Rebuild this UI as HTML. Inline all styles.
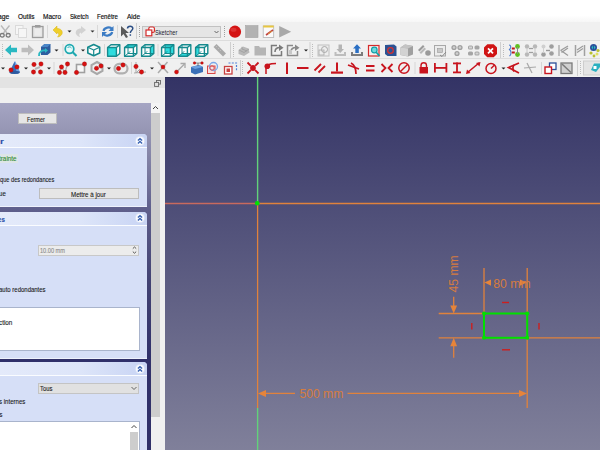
<!DOCTYPE html>
<html><head><meta charset="utf-8">
<style>
*{margin:0;padding:0;box-sizing:border-box}
html,body{width:600px;height:450px;overflow:hidden;background:#f0f0f0;font-family:"Liberation Sans",sans-serif;position:relative}
.a{position:absolute}
.t{position:absolute;white-space:nowrap;line-height:1;color:#111;transform-origin:0 0;-webkit-text-stroke:0.06px currentColor}
.tb{left:0;width:600px;background:#f0f0f0}
.hl{position:absolute;height:1px;background:#dcdcdc}
#view{left:165px;top:77px;width:435px;height:373px;background:linear-gradient(#333365 0%,#ababb8 156%);overflow:hidden}
#tp{left:0;top:103px;width:151px;height:347px;background:linear-gradient(#a5a5c3 0%,#9696b4 8%,#5f5f8c 30.5%,#434373 51%,#30306a 74%,#303068 100%)}
.box{position:absolute;left:0;width:147px;background:#d6dff7;border-top-right-radius:4px;border-bottom:1px solid #eef2fc}
.hdr{position:absolute;left:0;top:0;width:147px;height:14px;background:linear-gradient(90deg,#e4eafa,#dde5f9 55%,#c8d4f4);border-bottom:1px solid #fafcff;border-top-right-radius:4px}
.btn{position:absolute;background:#e6e6e6;border:1px solid #bdbdbd}
</style></head><body>
<div class="a" style="left:0;top:0;width:600px;height:22px;background:linear-gradient(#ffffff,#ffffff 70%,#f6f6f6)"></div>
<div class="t" style="left:-2.26px;top:12.95px;font-size:7.5px;transform:scaleX(0.900);color:#101010;-webkit-text-stroke:0.18px #101010">age</div>
<div class="t" style="left:17.50px;top:12.95px;font-size:7.5px;transform:scaleX(0.861);color:#101010;-webkit-text-stroke:0.18px #101010">Outils</div>
<div class="t" style="left:43.00px;top:12.95px;font-size:7.5px;transform:scaleX(0.864);color:#101010;-webkit-text-stroke:0.18px #101010">Macro</div>
<div class="t" style="left:69.50px;top:12.95px;font-size:7.5px;transform:scaleX(0.807);color:#101010;-webkit-text-stroke:0.18px #101010">Sketch</div>
<div class="t" style="left:97.00px;top:12.95px;font-size:7.5px;transform:scaleX(0.812);color:#101010;-webkit-text-stroke:0.18px #101010">Fenêtre</div>
<div class="t" style="left:127.00px;top:12.95px;font-size:7.5px;transform:scaleX(0.866);color:#101010;-webkit-text-stroke:0.18px #101010">Aide</div>
<div class="tb a" style="top:22px;height:18px"></div>
<div class="hl" style="left:0;top:40px;width:600px"></div>
<div class="tb a" style="top:41px;height:17px"></div>
<div class="hl" style="left:0;top:58px;width:600px"></div>
<div class="tb a" style="top:59px;height:18px"></div>
<svg class="a" style="left:0;top:0" width="600" height="80" viewBox="0 0 600 80">
<!-- row1 frame lines -->
<g fill="#d9d9d9">
<rect x="47" y="25" width="1" height="13"/>
<rect x="97" y="25" width="1" height="13"/>
<rect x="117" y="25" width="1" height="13"/>
</g>
<rect x="136" y="23" width="1" height="16" fill="#cfcfcf"/>
<g fill="#a0a0a0"><rect x="139" y="26" width="1" height="1"/><rect x="139" y="28" width="1" height="1"/><rect x="139" y="30" width="1" height="1"/><rect x="139" y="32" width="1" height="1"/><rect x="139" y="34" width="1" height="1"/><rect x="139" y="36" width="1" height="1"/>
<rect x="224" y="26" width="1" height="1"/><rect x="224" y="28" width="1" height="1"/><rect x="224" y="30" width="1" height="1"/><rect x="224" y="32" width="1" height="1"/><rect x="224" y="34" width="1" height="1"/><rect x="224" y="36" width="1" height="1"/></g>
<!-- scissors -->
<g fill="none" stroke="#b8b8b8" stroke-width="1.3"><line x1="1" y1="25.5" x2="7" y2="33"/><line x1="9.5" y1="25.5" x2="3.5" y2="33"/></g>
<g fill="none" stroke="#7c7c7c" stroke-width="1.3"><ellipse cx="2.2" cy="35.3" rx="2" ry="1.8"/><ellipse cx="8.2" cy="35.3" rx="2" ry="1.8"/></g>
<!-- copy (disabled) -->
<g fill="#f6f6f6" stroke="#dadada" stroke-width="1"><rect x="15.5" y="25.5" width="7.5" height="9"/><rect x="18.5" y="28.5" width="8" height="9"/></g>
<!-- paste -->
<rect x="32.5" y="26.5" width="10.5" height="11" fill="#e6e6e6" stroke="#9c9c9c" stroke-width="1.3"/>
<rect x="35" y="25" width="5.5" height="2.6" fill="#9c9c9c"/>
<rect x="34.8" y="29" width="6" height="6.5" fill="#ececec"/>
<!-- undo -->
<path d="M53 30 L57 26 L57 28.5 C61 28.5 63 31 62 34 C61 36 59 37 57.5 37 C59 35.5 59.5 33.5 57 32.5 L57 34 Z" fill="#efcf2a" stroke="#d8b414" stroke-width="0.5"/>
<polygon points="67.5,30.5 71.5,30.5 69.5,32.5" fill="#222"/>
<!-- redo disabled -->
<path d="M86 30 L81 26 L81 28.5 C77 28.5 75 31 76 34 C77 36 79 37 80.5 37 C79 35.5 78.5 33.5 81 32.5 L81 34 Z" fill="#d2d2d2"/>
<polygon points="90.5,30.5 94.5,30.5 92.5,32.5" fill="#333"/>
<!-- refresh -->
<g fill="none" stroke="#3c7cc4" stroke-width="2.2"><path d="M103.5 31 C104 27.5 110 26 112 29"/><path d="M112.2 32 C111.5 35.5 105.5 37 103.5 34"/></g>
<polygon points="113.5,26 113.5,31 108.5,31" fill="#3c7cc4"/><polygon points="102,37 102,32 107,32" fill="#3c7cc4"/>
<!-- whats this -->
<polygon points="121,26 121,36.5 123.5,34 126,38 128,37 125.5,33 129,33" fill="#5a5a5a"/>
<path d="M127.5 28.5 C127.5 25.5 133 25.5 132.8 28.5 C132.6 30.5 130.3 30.7 130.3 33" fill="none" stroke="#2c4f85" stroke-width="1.5"/>
<rect x="129.6" y="34.3" width="1.5" height="1.5" fill="#2c4f85"/>
<!-- workbench combo -->
<rect x="142.5" y="26.5" width="78" height="11" fill="#e5e5e5" stroke="#c2c2c2"/>
<rect x="148.8" y="27" width="5.6" height="5.4" rx="1.5" fill="#fff" stroke="#d42a2a" stroke-width="1.2"/>
<rect x="146" y="30" width="5.8" height="5.8" fill="#fff" stroke="#d42a2a" stroke-width="1.2"/>
<polyline points="214.5,31 216.5,33 218.5,31" fill="none" stroke="#666" stroke-width="1"/>
<text x="155" y="34.6" font-family="Liberation Sans" font-size="7.2px" fill="#202030" textLength="22.3" lengthAdjust="spacingAndGlyphs">Sketcher</text>
<!-- macro -->
<circle cx="235" cy="31.7" r="6.1" fill="#d41414"/>
<ellipse cx="233.5" cy="29.7" rx="3" ry="2" fill="#e85050" opacity="0.5"/>
<rect x="245.6" y="25.6" width="12.4" height="12" fill="#b2b2b2" stroke="#a4a4a4" stroke-width="0.6"/>
<rect x="263.2" y="26" width="10.5" height="11.5" fill="#fafafa" stroke="#b4b4b4" stroke-width="0.8"/>
<rect x="263.2" y="25.5" width="10.5" height="2" fill="#e8c640"/>
<line x1="266" y1="35" x2="273" y2="30" stroke="#c04040" stroke-width="1.6"/><line x1="268" y1="34" x2="272" y2="31" stroke="#e0b030" stroke-width="0.8"/>
<polygon points="279.2,26 291.2,31.7 279.2,37.4" fill="#a9a9a9"/>
</svg>
<svg class="a" style="left:0;top:0" width="600" height="80" viewBox="0 0 600 80"><rect x="2" y="44" width="1" height="1" fill="#bdbdbd"/><rect x="2" y="46" width="1" height="1" fill="#bdbdbd"/><rect x="2" y="48" width="1" height="1" fill="#bdbdbd"/><rect x="2" y="50" width="1" height="1" fill="#bdbdbd"/><rect x="2" y="52" width="1" height="1" fill="#bdbdbd"/><rect x="2" y="54" width="1" height="1" fill="#bdbdbd"/><rect x="2" y="56" width="1" height="1" fill="#bdbdbd"/><polygon points="5,50 11,44.5 11,47.8 17,47.8 17,52.2 11,52.2 11,55.5" fill="#2ab8c2"/><polygon points="34,50 28,44.5 28,47.8 21.5,47.8 21.5,52.2 28,52.2 28,55.5" fill="#bdbdbd"/><polygon points="41,47 44.5,44 50.5,44 50.5,52.5 47.5,55 41,55" fill="#2d5d9f"/><polygon points="41,47 44.5,44 50.5,44 47.5,47" fill="#4a86c8"/><path d="M39 56 C39 51 42 50 46 50.5" fill="none" stroke="#2ab8c2" stroke-width="1.8"/><polygon points="45,48 48,50.5 45,53" fill="#2ab8c2"/><polygon points="54.5,49.5 58.5,49.5 56.5,51.5" fill="#222"/><rect x="62.5" y="44" width="1" height="12" fill="#d6d6d6"/><circle cx="69.5" cy="49" r="4.3" fill="#e6fafa" stroke="#1ea8b0" stroke-width="1.7"/><line x1="72.5" y1="52" x2="76.5" y2="56" stroke="#1ea8b0" stroke-width="2.2"/><path d="M67.5 48 C68 46.5 70.5 46.5 71.5 48" stroke="#1ea8b0" stroke-width="0.9" fill="none"/><polygon points="81,49.5 85,49.5 83,51.5" fill="#222"/><polygon points="93.7,44.6 99.7,47.3 99.7,53 93.7,55.8 87.8,53 87.8,47.3" fill="#fbfbfb" stroke="#168a8e" stroke-width="1.6" stroke-linejoin="round"/><g stroke="#168a8e" stroke-width="1.2"><line x1="93.7" y1="50" x2="93.7" y2="55.5"/><line x1="93.7" y1="50" x2="88.3" y2="47.5"/><line x1="93.7" y1="50" x2="99.2" y2="47.5"/></g><rect x="104" y="44" width="1" height="12" fill="#d6d6d6"/><polygon points="107.6,47.5 111.0,44.7 119.8,44.7 119.8,53.5 116.39999999999999,56.3 107.6,56.3" fill="#fdfdfd"/><polygon points="107.6,47.5 116.39999999999999,47.5 116.39999999999999,56.3 107.6,56.3" fill="#2edcde"/><g fill="none" stroke="#168a8e" stroke-width="1.4" stroke-linejoin="round"><polygon points="107.6,47.5 111.0,44.7 119.8,44.7 119.8,53.5 116.39999999999999,56.3 107.6,56.3"/><polyline points="107.6,47.5 116.39999999999999,47.5 116.39999999999999,56.3"/><line x1="116.39999999999999" y1="47.5" x2="119.8" y2="44.7"/></g><polygon points="124.6,47.5 128.0,44.7 136.8,44.7 136.8,53.5 133.4,56.3 124.6,56.3" fill="#fdfdfd"/><polygon points="124.6,47.5 128.0,44.7 136.8,44.7 133.4,47.5" fill="#2edcde"/><g fill="none" stroke="#168a8e" stroke-width="1"><line x1="128.0" y1="53.5" x2="130.2" y2="51.3"/><polyline points="128.0,44.7 128.0,53.5 124.6,56.3"/><line x1="128.0" y1="53.5" x2="136.8" y2="53.5"/></g><g fill="none" stroke="#168a8e" stroke-width="1.4" stroke-linejoin="round"><polygon points="124.6,47.5 128.0,44.7 136.8,44.7 136.8,53.5 133.4,56.3 124.6,56.3"/><polyline points="124.6,47.5 133.4,47.5 133.4,56.3"/><line x1="133.4" y1="47.5" x2="136.8" y2="44.7"/></g><polygon points="141.60000000000002,47.5 145.00000000000003,44.7 153.80000000000004,44.7 153.80000000000004,53.5 150.40000000000003,56.3 141.60000000000002,56.3" fill="#fdfdfd"/><polygon points="150.40000000000003,47.5 153.80000000000004,44.7 153.80000000000004,53.5 150.40000000000003,56.3" fill="#2edcde"/><g fill="none" stroke="#168a8e" stroke-width="1"><line x1="145.00000000000003" y1="53.5" x2="147.20000000000002" y2="51.3"/><polyline points="145.00000000000003,44.7 145.00000000000003,53.5 141.60000000000002,56.3"/><line x1="145.00000000000003" y1="53.5" x2="153.80000000000004" y2="53.5"/></g><g fill="none" stroke="#168a8e" stroke-width="1.4" stroke-linejoin="round"><polygon points="141.60000000000002,47.5 145.00000000000003,44.7 153.80000000000004,44.7 153.80000000000004,53.5 150.40000000000003,56.3 141.60000000000002,56.3"/><polyline points="141.60000000000002,47.5 150.40000000000003,47.5 150.40000000000003,56.3"/><line x1="150.40000000000003" y1="47.5" x2="153.80000000000004" y2="44.7"/></g><rect x="157.5" y="44" width="1" height="12" fill="#d6d6d6"/><polygon points="161.60000000000002,47.5 165.00000000000003,44.7 173.80000000000004,44.7 173.80000000000004,53.5 170.40000000000003,56.3 161.60000000000002,56.3" fill="#fdfdfd"/><polygon points="165.00000000000003,44.7 173.80000000000004,44.7 173.80000000000004,53.5 165.00000000000003,53.5" fill="#2edcde"/><g fill="none" stroke="#168a8e" stroke-width="1"><line x1="165.00000000000003" y1="53.5" x2="167.20000000000002" y2="51.3"/><polyline points="165.00000000000003,44.7 165.00000000000003,53.5 161.60000000000002,56.3"/><line x1="165.00000000000003" y1="53.5" x2="173.80000000000004" y2="53.5"/></g><g fill="none" stroke="#168a8e" stroke-width="1.4" stroke-linejoin="round"><polygon points="161.60000000000002,47.5 165.00000000000003,44.7 173.80000000000004,44.7 173.80000000000004,53.5 170.40000000000003,56.3 161.60000000000002,56.3"/><polyline points="161.60000000000002,47.5 170.40000000000003,47.5 170.40000000000003,56.3"/><line x1="170.40000000000003" y1="47.5" x2="173.80000000000004" y2="44.7"/></g><polygon points="178.60000000000002,47.5 182.00000000000003,44.7 190.80000000000004,44.7 190.80000000000004,53.5 187.40000000000003,56.3 178.60000000000002,56.3" fill="#fdfdfd"/><polygon points="178.60000000000002,56.3 182.00000000000003,53.5 190.80000000000004,53.5 187.40000000000003,56.3" fill="#2edcde"/><g fill="none" stroke="#168a8e" stroke-width="1"><line x1="182.00000000000003" y1="53.5" x2="184.20000000000002" y2="51.3"/><polyline points="182.00000000000003,44.7 182.00000000000003,53.5 178.60000000000002,56.3"/><line x1="182.00000000000003" y1="53.5" x2="190.80000000000004" y2="53.5"/></g><g fill="none" stroke="#168a8e" stroke-width="1.4" stroke-linejoin="round"><polygon points="178.60000000000002,47.5 182.00000000000003,44.7 190.80000000000004,44.7 190.80000000000004,53.5 187.40000000000003,56.3 178.60000000000002,56.3"/><polyline points="178.60000000000002,47.5 187.40000000000003,47.5 187.40000000000003,56.3"/><line x1="187.40000000000003" y1="47.5" x2="190.80000000000004" y2="44.7"/></g><polygon points="195.60000000000002,47.5 199.00000000000003,44.7 207.80000000000004,44.7 207.80000000000004,53.5 204.40000000000003,56.3 195.60000000000002,56.3" fill="#fdfdfd"/><polygon points="195.60000000000002,47.5 199.00000000000003,44.7 199.00000000000003,53.5 195.60000000000002,56.3" fill="#2edcde"/><g fill="none" stroke="#168a8e" stroke-width="1"><line x1="199.00000000000003" y1="53.5" x2="201.20000000000002" y2="51.3"/><polyline points="199.00000000000003,44.7 199.00000000000003,53.5 195.60000000000002,56.3"/><line x1="199.00000000000003" y1="53.5" x2="207.80000000000004" y2="53.5"/></g><g fill="none" stroke="#168a8e" stroke-width="1.4" stroke-linejoin="round"><polygon points="195.60000000000002,47.5 199.00000000000003,44.7 207.80000000000004,44.7 207.80000000000004,53.5 204.40000000000003,56.3 195.60000000000002,56.3"/><polyline points="195.60000000000002,47.5 204.40000000000003,47.5 204.40000000000003,56.3"/><line x1="204.40000000000003" y1="47.5" x2="207.80000000000004" y2="44.7"/></g><polygon points="213.5,47 216.5,44 226,53.5 223,56.5" fill="#aaaaaa"/><g stroke="#d8d8d8" stroke-width="0.5"><line x1="216" y1="47" x2="217" y2="46"/><line x1="218" y1="49" x2="219" y2="48"/><line x1="220" y1="51" x2="221" y2="50"/></g><rect x="230" y="42" width="1" height="16" fill="#cfcfcf"/><rect x="233" y="44" width="1" height="1" fill="#bdbdbd"/><rect x="233" y="46" width="1" height="1" fill="#bdbdbd"/><rect x="233" y="48" width="1" height="1" fill="#bdbdbd"/><rect x="233" y="50" width="1" height="1" fill="#bdbdbd"/><rect x="233" y="52" width="1" height="1" fill="#bdbdbd"/><rect x="233" y="54" width="1" height="1" fill="#bdbdbd"/><rect x="233" y="56" width="1" height="1" fill="#bdbdbd"/><g fill="#b9b9b9"><polygon points="238.5,50 243,46.5 248.5,48.5 249.5,52.5 244,56 238.5,54"/></g><g fill="none" stroke="#9c9c9c" stroke-width="0.8"><polyline points="239,50 244,52.5 249,49"/><polyline points="242,46.8 242,49 247,51"/></g><path d="M254.5 46 L259 46 L260 47.5 L266 47.5 L266 55.5 L254.5 55.5 Z" fill="#b5b5b5"/><g fill="none" stroke="#7a7a7a" stroke-width="1.5"><polyline points="277,45.5 271.5,45.5 271.5,55.5 281.5,55.5 281.5,51"/></g><path d="M275 52 C275 48.5 277 47.5 280 47.5" stroke="#7a7a7a" stroke-width="1.6" fill="none"/><polygon points="279,44.5 283.5,47.8 279,51" fill="#7a7a7a"/><g fill="none" stroke="#8a8a8a" stroke-width="1.5"><polyline points="293,45.5 287.5,45.5 287.5,55.5 297.5,55.5 297.5,51"/></g><path d="M291 52 C291 48.5 293 47.5 296 47.5" stroke="#8a8a8a" stroke-width="1.6" fill="none"/><polygon points="295,44.5 299.5,47.8 295,51" fill="#8a8a8a"/><rect x="289" y="50" width="3" height="4" fill="#c8c8c8"/><polygon points="304,49.5 308,49.5 306,51.5" fill="#222"/><rect x="309.5" y="42" width="1" height="16" fill="#cfcfcf"/><rect x="312" y="44" width="1" height="1" fill="#bdbdbd"/><rect x="312" y="46" width="1" height="1" fill="#bdbdbd"/><rect x="312" y="48" width="1" height="1" fill="#bdbdbd"/><rect x="312" y="50" width="1" height="1" fill="#bdbdbd"/><rect x="312" y="52" width="1" height="1" fill="#bdbdbd"/><rect x="312" y="54" width="1" height="1" fill="#bdbdbd"/><rect x="312" y="56" width="1" height="1" fill="#bdbdbd"/><rect x="318" y="45" width="11" height="11" fill="#eeeeee" stroke="#c0c0c0" stroke-width="1"/><circle cx="324.5" cy="49.5" r="3" fill="none" stroke="#a8a8a8" stroke-width="1"/><rect x="319" y="50" width="5" height="5" fill="none" stroke="#a8a8a8" stroke-width="0.8"/><rect x="334.5" y="52" width="11.5" height="4" fill="#bdbdbd"/><rect x="336.5" y="52" width="7.5" height="2" fill="#eee"/><polygon points="338.5,44.5 342,44.5 342,49 344,49 340.2,53 336.5,49 338.5,49" fill="#b4b4b4"/><rect x="351" y="52" width="12" height="4" fill="#7c7c7c"/><rect x="353" y="52" width="8" height="2" fill="#eee"/><polygon points="355.3,53 358.8,53 358.8,48.5 361,48.5 357,44.2 353,48.5 355.3,48.5" fill="#2a6fc4"/><rect x="368.5" y="45.5" width="10.5" height="10.5" fill="#fbeeee" stroke="#d42a2a" stroke-width="1.2"/><circle cx="374.3" cy="50" r="2.8" fill="#6fd8dd" stroke="#14a0a8" stroke-width="1.2"/><line x1="376" y1="52" x2="379.5" y2="56" stroke="#14a0a8" stroke-width="1.8"/><polygon points="385,45 394,44.5 396.5,46.5 396.5,56 387.5,56 385,54" fill="#2b5293"/><circle cx="390.5" cy="50.5" r="2.8" fill="none" stroke="#d43030" stroke-width="1.3"/><polygon points="400.5,47.5 405,44.5 413,46 413,54.5 408,56.5 400.5,55" fill="#a0a0a0"/><polygon points="400.5,47.5 405,44.5 413,46 408,48.5" fill="#c4c4c4"/><polygon points="400.5,47.5 408,48.5 408,56.5 400.5,55" fill="#d2d2d2"/><g fill="#9a9a9a"><circle cx="428" cy="53" r="2.8"/><polygon points="418,50 423,45 424.5,46.5 419.5,51.5"/><polygon points="421,54 426,49 424.5,47.5 419.5,52.5" fill="#b8b8b8"/></g><rect x="434.5" y="45.5" width="11" height="10.5" fill="#ececec" stroke="#a8a8a8" stroke-width="1"/><rect x="437.5" y="48.5" width="5" height="4" fill="#c8c8c8" stroke="#999" stroke-width="0.6"/><polyline points="440,55 442,56.5 446,52" fill="none" stroke="#888" stroke-width="1"/><g fill="#a0a0a0"><circle cx="454" cy="47.5" r="2.6"/><circle cx="460" cy="47.5" r="2.6"/><circle cx="457" cy="53.5" r="2.6"/></g><g fill="#cfcfcf"><circle cx="454" cy="47.5" r="1.2"/><circle cx="460" cy="47.5" r="1.2"/><circle cx="457" cy="53.5" r="1.2"/></g><g fill="#a5a5a5"><rect x="468" y="45.5" width="5" height="4" rx="1.5"/><rect x="474.5" y="45.5" width="5" height="4" rx="1.5"/><rect x="468" y="51.5" width="5" height="4" rx="1.5"/><rect x="474.5" y="51.5" width="5" height="4" rx="1.5"/></g><g fill="#d4d4d4"><rect x="469" y="46.5" width="3" height="2"/><rect x="475.5" y="52.5" width="3" height="2"/></g><polygon points="487.3,44.3 493.7,44.3 497,47.6 497,54 493.7,57.3 487.3,57.3 484,54 484,47.6" fill="#d01414"/><g stroke="#fff" stroke-width="1.7"><line x1="488" y1="48.3" x2="493" y2="53.3"/><line x1="493" y1="48.3" x2="488" y2="53.3"/></g><rect x="500" y="42" width="1" height="16" fill="#cfcfcf"/><rect x="503" y="44" width="1" height="1" fill="#bdbdbd"/><rect x="503" y="46" width="1" height="1" fill="#bdbdbd"/><rect x="503" y="48" width="1" height="1" fill="#bdbdbd"/><rect x="503" y="50" width="1" height="1" fill="#bdbdbd"/><rect x="503" y="52" width="1" height="1" fill="#bdbdbd"/><rect x="503" y="54" width="1" height="1" fill="#bdbdbd"/><rect x="503" y="56" width="1" height="1" fill="#bdbdbd"/><path d="M509 45 C511 45 511.5 48 509.5 49.5 C511.5 51 511.5 54.5 509.5 56" fill="none" stroke="#4a7ad0" stroke-width="1.1"/><g fill="#c01818"><rect x="511.8" y="47.5" width="3" height="2"/><rect x="511.8" y="51.5" width="3" height="2"/></g><g fill="#60c020"><circle cx="517.5" cy="46.5" r="2.4"/><circle cx="517.5" cy="54.5" r="2.4"/></g><rect x="517" y="47" width="1" height="7" fill="#888"/><g fill="#b8b8b8"><circle cx="527" cy="46.5" r="2.2"/><circle cx="535" cy="46.5" r="2.2"/><circle cx="527" cy="54.5" r="2.2"/><circle cx="535" cy="54.5" r="2.2"/></g><g stroke="#a0a0a0" stroke-width="1.3"><line x1="529" y1="48.5" x2="533" y2="48.5"/><line x1="529" y1="52.5" x2="533" y2="52.5"/></g><g stroke="#cfcfcf" stroke-width="1.2"><line x1="527" y1="48" x2="527" y2="53"/><line x1="535" y1="48" x2="535" y2="53"/></g><g fill="#9e9e9e"><circle cx="543.5" cy="54.5" r="2.3"/><circle cx="551.5" cy="46.5" r="2.3"/><circle cx="551.5" cy="53.5" r="2.3"/></g><circle cx="543.5" cy="46.5" r="2" fill="#cfcfcf"/><rect x="546" y="49.8" width="4" height="1.4" fill="#999"/><rect x="543" y="48" width="1" height="5" fill="#d0d0d0"/><g stroke="#b0b0b0" stroke-width="1.5"><line x1="559" y1="45" x2="559" y2="56"/></g><g stroke="#9a9a9a" stroke-width="1.2"><line x1="560.5" y1="50.5" x2="568" y2="46"/><line x1="561.5" y1="52.5" x2="568" y2="48"/><line x1="561" y1="50.5" x2="568" y2="55.5"/></g><g stroke="#a0a0a0" stroke-width="1.5"><line x1="575.5" y1="45" x2="575.5" y2="56"/><line x1="584.5" y1="45" x2="584.5" y2="56"/></g><g stroke="#9a9a9a" stroke-width="1.1"><line x1="577" y1="50" x2="583" y2="46"/><line x1="577" y1="52.5" x2="583" y2="48.5"/></g><circle cx="593.5" cy="47.5" r="3.5" fill="#2b4e9a"/><polygon points="591.5,47.5 593,45.5 593,49.5" fill="#20c0c0"/><polygon points="595.5,47.5 594,45.5 594,49.5" fill="#20c0c0"/><g fill="#b8c030"><circle cx="591" cy="53" r="1.6"/><circle cx="598" cy="50.5" r="1.6"/><circle cx="594" cy="56" r="1.4"/></g><circle cx="597" cy="54" r="1.5" fill="#e0e060"/></svg><svg class="a" style="left:0;top:0" width="600" height="80" viewBox="0 0 600 80"><polygon points="1,67.5 5,67.5 3,69.5" fill="#222"/><polygon points="14.5,61.5 9.5,72 11.5,73.8 18,73.8 19.8,72" fill="#3a6cb8"/><polygon points="14.5,61.5 15.5,61.5 19.8,72 16.5,72" fill="#6ea4e6"/><ellipse cx="14.6" cy="72.3" rx="5.2" ry="1.6" fill="#2d5aa0"/><circle cx="11" cy="70" r="2.15" fill="#d81010" stroke="#a00c0c" stroke-width="0.4"/><circle cx="17" cy="67" r="2.15" fill="#d81010" stroke="#a00c0c" stroke-width="0.4"/><polygon points="24,67.5 28,67.5 26,69.5" fill="#222"/><line x1="35" y1="69" x2="40" y2="67" stroke="#b8b8b8" stroke-width="2"/><circle cx="34" cy="64.5" r="2.15" fill="#d81010" stroke="#a00c0c" stroke-width="0.4"/><circle cx="41" cy="64" r="2.15" fill="#d81010" stroke="#a00c0c" stroke-width="0.4"/><circle cx="33.5" cy="72" r="2.15" fill="#d81010" stroke="#a00c0c" stroke-width="0.4"/><circle cx="40.5" cy="72" r="2.15" fill="#d81010" stroke="#a00c0c" stroke-width="0.4"/><polygon points="47,67.5 51,67.5 49,69.5" fill="#222"/><rect x="53.5" y="62" width="1" height="12" fill="#d6d6d6"/><polyline points="59.5,72.5 61.5,67 65,72.5 67.5,64" fill="none" stroke="#b0b0b0" stroke-width="1.2"/><circle cx="59.5" cy="72.5" r="2.15" fill="#d81010" stroke="#a00c0c" stroke-width="0.4"/><circle cx="61.5" cy="67" r="2.15" fill="#d81010" stroke="#a00c0c" stroke-width="0.4"/><circle cx="65" cy="72.5" r="2.15" fill="#d81010" stroke="#a00c0c" stroke-width="0.4"/><circle cx="67.5" cy="64" r="2.15" fill="#d81010" stroke="#a00c0c" stroke-width="0.4"/><rect x="76.5" y="64.5" width="8" height="8" fill="#f8f8f8" stroke="#a0a0a0" stroke-width="1.6"/><circle cx="76.5" cy="72.5" r="2.15" fill="#d81010" stroke="#a00c0c" stroke-width="0.4"/><circle cx="84.5" cy="64" r="2.15" fill="#d81010" stroke="#a00c0c" stroke-width="0.4"/><polygon points="97,62 102.5,65 102.5,71 97,74 91.5,71 91.5,65" fill="none" stroke="#a8a8a8" stroke-width="2"/><circle cx="96.5" cy="68.3" r="2.15" fill="#d81010" stroke="#a00c0c" stroke-width="0.4"/><circle cx="101" cy="66" r="2.15" fill="#d81010" stroke="#a00c0c" stroke-width="0.4"/><polygon points="107,67.5 111,67.5 109,69.5" fill="#222"/><rect x="114.5" y="63.8" width="13" height="9.5" rx="4.75" fill="none" stroke="#b0b0b0" stroke-width="2.2"/><circle cx="118.5" cy="68.5" r="2.15" fill="#d81010" stroke="#a00c0c" stroke-width="0.4"/><circle cx="123" cy="65" r="2.15" fill="#d81010" stroke="#a00c0c" stroke-width="0.4"/><rect x="131" y="62" width="1" height="12" fill="#d6d6d6"/><g stroke="#a8a8a8" stroke-width="1"><line x1="136" y1="62" x2="136" y2="73"/><line x1="134" y1="73" x2="146" y2="72"/><line x1="136" y1="73" x2="140" y2="69"/></g><circle cx="136" cy="66.5" r="2.15" fill="#d81010" stroke="#a00c0c" stroke-width="0.4"/><circle cx="141.5" cy="72" r="2.15" fill="#d81010" stroke="#a00c0c" stroke-width="0.4"/><polygon points="150,67.5 154,67.5 152,69.5" fill="#222"/><g stroke="#ababab" stroke-width="1.5"><line x1="158" y1="62" x2="168" y2="73"/><line x1="167.5" y1="62" x2="158" y2="73"/></g><circle cx="163" cy="67" r="2" fill="#d81010" stroke="#a00c0c" stroke-width="0.4"/><line x1="177" y1="71.5" x2="184.5" y2="64" stroke="#a8a8a8" stroke-width="1.3"/><polyline points="180.5,63.5 185,63.5 185,68" fill="none" stroke="#a8a8a8" stroke-width="1.3"/><circle cx="176.5" cy="72" r="2" fill="#d81010" stroke="#a00c0c" stroke-width="0.4"/><polygon points="191,67 199,65 203,67 203,72 195,74.5 191,72.5" fill="#3a70b8"/><polygon points="191,67 199,65 203,67 195,69" fill="#6aa0e0"/><line x1="194.5" y1="63" x2="202" y2="63" stroke="#777" stroke-width="0.8"/><line x1="198" y1="63" x2="198" y2="66" stroke="#555" stroke-width="0.8"/><circle cx="194.5" cy="63" r="1.3" fill="#d81010" stroke="#a00c0c" stroke-width="0.4"/><circle cx="202" cy="63" r="1.3" fill="#d81010" stroke="#a00c0c" stroke-width="0.4"/><rect x="207.5" y="66" width="7.5" height="7.5" fill="#f7e0e0" stroke="#d84848" stroke-width="1"/><circle cx="213.5" cy="66.5" r="4" fill="none" stroke="#7aa8e8" stroke-width="1.3"/><circle cx="212" cy="68" r="2.2" fill="none" stroke="#d84848" stroke-width="0.9"/><rect x="224.5" y="66.5" width="7.5" height="7.5" fill="#fff" stroke="#c84040" stroke-width="1.3"/><rect x="226.5" y="68.5" width="3.5" height="3.5" fill="#c84040"/><polyline points="228.5,63 236.5,63 236.5,70.5" fill="none" stroke="#5080d8" stroke-width="1.2" stroke-dasharray="2,1.3"/><rect x="240" y="60" width="1" height="16" fill="#cfcfcf"/><rect x="242" y="61" width="1" height="1" fill="#bdbdbd"/><rect x="242" y="63" width="1" height="1" fill="#bdbdbd"/><rect x="242" y="65" width="1" height="1" fill="#bdbdbd"/><rect x="242" y="67" width="1" height="1" fill="#bdbdbd"/><rect x="242" y="69" width="1" height="1" fill="#bdbdbd"/><rect x="242" y="71" width="1" height="1" fill="#bdbdbd"/><rect x="242" y="73" width="1" height="1" fill="#bdbdbd"/><g stroke="#c8141e" stroke-width="1.8"><line x1="247.5" y1="62.5" x2="250.8" y2="65.8"/><line x1="258.5" y1="62.5" x2="255.2" y2="65.8"/><line x1="247.5" y1="73.5" x2="250.8" y2="70.2"/><line x1="258.5" y1="73.5" x2="255.2" y2="70.2"/></g><circle cx="253" cy="68" r="2.9" fill="#c8141e"/><path d="M266 74 L266 68 C266 64.5 270 63.5 276 63.5" fill="none" stroke="#c8141e" stroke-width="1.5"/><circle cx="267.3" cy="66.3" r="2.8" fill="#c8141e"/><rect x="286" y="62.5" width="2" height="11.5" fill="#c8141e"/><rect x="297" y="67" width="11.5" height="2" fill="#c8141e"/><g stroke="#c8141e" stroke-width="1.8"><line x1="314.5" y1="70.5" x2="321" y2="64"/><line x1="318.5" y1="72.5" x2="325" y2="66"/></g><rect x="336" y="62.5" width="2" height="9" fill="#c8141e"/><rect x="331" y="71.5" width="12" height="2.2" fill="#c8141e"/><g stroke="#c8141e" stroke-width="1.7" fill="none"><line x1="348" y1="65" x2="359" y2="69"/><path d="M351 63 C355 65 356 69 356 74"/></g><rect x="366" y="65" width="8.5" height="2" fill="#c8141e"/><rect x="366" y="69.5" width="8.5" height="2" fill="#c8141e"/><g stroke="#c8141e" stroke-width="1.8" fill="none"><polyline points="381.5,64 385.5,68 381.5,72"/><polyline points="392.5,64 388.5,68 392.5,72"/></g><circle cx="404" cy="68" r="5.2" fill="none" stroke="#c8141e" stroke-width="1.5"/><line x1="400.5" y1="71.5" x2="407.5" y2="64.5" stroke="#c8141e" stroke-width="1.5"/><rect x="414.5" y="62" width="1" height="12" fill="#d6d6d6"/><path d="M421 67 L421 65.5 C421 61.8 426.5 61.8 426.5 65.5 L426.5 67" fill="none" stroke="#c8141e" stroke-width="1.4"/><rect x="419.5" y="67" width="8.5" height="6.5" fill="#c8141e"/><rect x="434" y="63" width="1.8" height="9.5" fill="#c8141e"/><rect x="445.5" y="63" width="1.8" height="9.5" fill="#c8141e"/><rect x="434" y="67" width="13" height="1.8" fill="#c8141e"/><rect x="453" y="62.5" width="8" height="1.8" fill="#c8141e"/><rect x="453" y="71.5" width="8" height="1.8" fill="#c8141e"/><rect x="456.1" y="62.5" width="1.8" height="10.5" fill="#c8141e"/><line x1="467.5" y1="72.5" x2="479" y2="63" stroke="#c8141e" stroke-width="1.6"/><polygon points="466,74 467,69.5 470.5,73" fill="#c8141e"/><polygon points="480.5,62 479.5,66.5 476,63" fill="#c8141e"/><circle cx="491" cy="68.5" r="5" fill="none" stroke="#c8141e" stroke-width="1.5"/><line x1="491" y1="68.5" x2="494.5" y2="65" stroke="#c8141e" stroke-width="1.4"/><polygon points="501.5,67.5 505.5,67.5 503.5,69.5" fill="#222"/><g stroke="#c8141e" stroke-width="1.7" fill="none"><polyline points="519,63 508.5,67.5 519,73"/><path d="M514 65 C512.5 67 512.5 69 514 71.5"/></g><g stroke="#a8a8a8" stroke-width="1.2"><line x1="524" y1="68" x2="536" y2="67"/><line x1="527" y1="63" x2="532" y2="73"/></g><rect x="541" y="62" width="1" height="12" fill="#d6d6d6"/><rect x="549.5" y="63" width="6.5" height="6.5" fill="#fff" stroke="#2a4e98" stroke-width="1.3"/><rect x="545" y="67" width="6.5" height="6.5" fill="#fff" stroke="#c8141e" stroke-width="1.4"/><rect x="561" y="63" width="11" height="10.5" fill="#d0d0d0" stroke="#7a7a7a" stroke-width="1.3"/><line x1="562" y1="64" x2="571" y2="72.5" stroke="#7a7a7a" stroke-width="1.5"/><rect x="577" y="60" width="1" height="16" fill="#cfcfcf"/><rect x="580" y="61" width="1" height="1" fill="#bdbdbd"/><rect x="580" y="63" width="1" height="1" fill="#bdbdbd"/><rect x="580" y="65" width="1" height="1" fill="#bdbdbd"/><rect x="580" y="67" width="1" height="1" fill="#bdbdbd"/><rect x="580" y="69" width="1" height="1" fill="#bdbdbd"/><rect x="580" y="71" width="1" height="1" fill="#bdbdbd"/><rect x="580" y="73" width="1" height="1" fill="#bdbdbd"/><rect x="583.5" y="61" width="17" height="14" fill="#e4e4e4" stroke="#cdcdcd"/><polygon points="591,70 594,63.5 600,63.5 600,67 596,72" fill="#2ab0c0"/><rect x="593.5" y="66" width="3" height="3" fill="#fff"/></svg><div class="a" style="left:0;top:77px;width:165px;height:11px;background:#e3e3e3"></div>
<div class="a" style="left:0;top:88px;width:165px;height:362px;background:#f0f0f0"></div>
<div id="tp" class="a"></div>
<svg class="a" style="left:153.5px;top:80px" width="8" height="7" viewBox="0 0 8 7"><rect x="2.5" y="0.5" width="4" height="3.6" fill="none" stroke="#666" stroke-width="0.9"/><rect x="0.6" y="2.4" width="4" height="4" fill="#e3e3e3" stroke="#666" stroke-width="0.9"/></svg>
<div class="btn" style="left:17.5px;top:113px;width:39.2px;height:11px"></div>
<div class="box" style="top:134px;height:73px"><div class="hdr"></div></div>
<div class="box" style="top:212px;height:146.5px"><div class="hdr"></div></div>
<div class="box" style="top:362px;height:100px"><div class="hdr"></div></div>
<svg class="a" style="left:134.3px;top:134.8px" width="12" height="12" viewBox="0 0 12 12"><circle cx="6" cy="6" r="4.8" fill="#f8faff" stroke="#d0dbf2" stroke-width="0.8"/><polyline points="3.9,5.6 6,3.7 8.1,5.6" fill="none" stroke="#3560b0" stroke-width="1.3"/><polyline points="3.9,8.4 6,6.5 8.1,8.4" fill="none" stroke="#3560b0" stroke-width="1.3"/></svg><svg class="a" style="left:134.3px;top:212.3px" width="12" height="12" viewBox="0 0 12 12"><circle cx="6" cy="6" r="4.8" fill="#f8faff" stroke="#d0dbf2" stroke-width="0.8"/><polyline points="3.9,5.6 6,3.7 8.1,5.6" fill="none" stroke="#3560b0" stroke-width="1.3"/><polyline points="3.9,8.4 6,6.5 8.1,8.4" fill="none" stroke="#3560b0" stroke-width="1.3"/></svg><svg class="a" style="left:134.3px;top:362.5px" width="12" height="12" viewBox="0 0 12 12"><circle cx="6" cy="6" r="4.8" fill="#f8faff" stroke="#d0dbf2" stroke-width="0.8"/><polyline points="3.9,5.6 6,3.7 8.1,5.6" fill="none" stroke="#3560b0" stroke-width="1.3"/><polyline points="3.9,8.4 6,6.5 8.1,8.4" fill="none" stroke="#3560b0" stroke-width="1.3"/></svg>
<div class="a" style="left:0;top:154px;width:17.5px;height:9px;background:#dde5e6"></div>
<div class="btn" style="left:39px;top:187.6px;width:99.8px;height:11px"></div>
<div class="a" style="left:38px;top:244.5px;width:101px;height:11.5px;background:#ececec;border:1px solid #c8c8c8"></div>
<svg class="a" style="left:131px;top:245px" width="7" height="10" viewBox="0 0 7 10"><polyline points="1.8,3.6 3.5,2 5.2,3.6" fill="none" stroke="#444" stroke-width="0.9"/><polyline points="1.8,6.6 3.5,8.2 5.2,6.6" fill="none" stroke="#444" stroke-width="0.9"/></svg>
<div class="a" style="left:-2px;top:306.5px;width:141.5px;height:44px;background:#fff;border:1px solid #a9b4cc"></div>
<div class="a" style="left:38px;top:382.5px;width:101px;height:11px;background:#e1e1e1;border:1px solid #c4c4c4"></div>
<svg class="a" style="left:130px;top:384px" width="8" height="8" viewBox="0 0 8 8"><polyline points="1.5,3 4,5.5 6.5,3" fill="none" stroke="#555" stroke-width="0.9"/></svg>
<div class="a" style="left:-2px;top:420.6px;width:141.5px;height:40px;background:#fff;border:1px solid #a9b4cc"></div>
<div class="a" style="left:130px;top:432px;width:8px;height:20px;background:#cdcdcd"></div>
<svg class="a" style="left:130px;top:423px" width="8" height="8" viewBox="0 0 8 8"><polyline points="1.5,5 4,2.5 6.5,5" fill="none" stroke="#444" stroke-width="1"/></svg>
<div class="a" style="left:151px;top:103px;width:9px;height:10px;background:#f4f4f4"></div>
<svg class="a" style="left:151px;top:104px" width="9" height="8" viewBox="0 0 9 8"><polyline points="2,5 4.5,2.5 7,5" fill="none" stroke="#444" stroke-width="1"/></svg>
<div class="a" style="left:151px;top:113px;width:9px;height:304px;background:#cdcdcd"></div>
<div class="a" style="left:151px;top:417px;width:9px;height:33px;background:#f0f0f0"></div>
<div class="t" style="left:27.10px;top:116.98px;font-size:6.4px;transform:scaleX(0.868);color:#1a1a1a;-webkit-text-stroke:0.1px currentColor">Fermer</div>
<div class="t" style="left:-0.30px;top:138.78px;font-size:6.4px;transform:scaleX(1.548);color:#2b50a8;font-weight:bold;-webkit-text-stroke:0.1px currentColor">r</div>
<div class="t" style="left:-0.60px;top:156.08px;font-size:6.4px;transform:scaleX(0.989);color:#2f8a2f;-webkit-text-stroke:0.1px currentColor">trainte</div>
<div class="t" style="left:0.30px;top:177.28px;font-size:6.4px;transform:scaleX(0.884);color:#1a1a1a;-webkit-text-stroke:0.1px currentColor">que des redondances</div>
<div class="t" style="left:-0.80px;top:191.38px;font-size:6.4px;transform:scaleX(0.955);color:#1a1a1a;-webkit-text-stroke:0.1px currentColor">ue</div>
<div class="t" style="left:70.80px;top:191.58px;font-size:6.4px;transform:scaleX(0.969);color:#1a1a1a;-webkit-text-stroke:0.1px currentColor">Mettre à jour</div>
<div class="t" style="left:-2.20px;top:216.98px;font-size:6.4px;transform:scaleX(0.976);color:#2b50a8;font-weight:bold;-webkit-text-stroke:0.1px currentColor">es</div>
<div class="t" style="left:40.00px;top:248.28px;font-size:6.4px;transform:scaleX(0.879);color:#8a8a8a;-webkit-text-stroke:0.1px currentColor">10.00 mm</div>
<div class="t" style="left:-0.60px;top:286.88px;font-size:6.4px;transform:scaleX(0.937);color:#1a1a1a;-webkit-text-stroke:0.1px currentColor">auto redondantes</div>
<div class="t" style="left:-0.60px;top:319.68px;font-size:6.4px;transform:scaleX(0.991);color:#1a1a1a;-webkit-text-stroke:0.1px currentColor">ction</div>
<div class="t" style="left:40.00px;top:386.38px;font-size:6.4px;transform:scaleX(0.917);color:#1a1a1a;-webkit-text-stroke:0.1px currentColor">Tous</div>
<div class="t" style="left:-0.60px;top:399.48px;font-size:6.4px;transform:scaleX(0.951);color:#1a1a1a;-webkit-text-stroke:0.1px currentColor">s internes</div>
<div class="t" style="left:-0.80px;top:411.68px;font-size:6.4px;transform:scaleX(1.000);color:#1a1a1a;-webkit-text-stroke:0.1px currentColor">s</div>
<div id="view" class="a"></div>
<div class="a" style="left:165px;top:77px;width:435px;height:1px;background:#2b2b58"></div>
<svg class="a" style="left:0;top:0" width="600" height="450" viewBox="0 0 600 450">
<defs><clipPath id="vc"><rect x="165" y="77" width="435" height="373"/></clipPath></defs>
<g clip-path="url(#vc)" shape-rendering="geometricPrecision">
<line x1="257.6" y1="77" x2="257.6" y2="203.5" stroke="#62d27a" stroke-width="1.4"/>
<line x1="257.6" y1="408" x2="257.6" y2="450" stroke="#62d27a" stroke-width="1.4"/>
<line x1="165" y1="203.5" x2="257.6" y2="203.5" stroke="#c86a5e" stroke-width="1.3"/>
<g stroke="#e0823c" stroke-width="1.3" fill="none">
<line x1="257.6" y1="203.5" x2="600" y2="203.5"/>
<line x1="257.6" y1="203.5" x2="257.6" y2="408"/>
<line x1="265" y1="393.4" x2="295" y2="393.4"/>
<line x1="347.5" y1="393.4" x2="520" y2="393.4"/>
<line x1="527.2" y1="268" x2="527.2" y2="408"/>
<line x1="484" y1="268" x2="484" y2="313.5"/>
<line x1="438.7" y1="313.5" x2="484" y2="313.5"/>
<line x1="438.7" y1="337.8" x2="600" y2="337.8"/>
<line x1="453.7" y1="296.7" x2="453.7" y2="307"/>
<line x1="453.7" y1="345" x2="453.7" y2="357.8"/>
</g>
<g fill="#e6843a">
<polygon points="258,393.4 266,389.9 266,396.9"/>
<polygon points="527,393.4 519,389.9 519,396.9"/>
<polygon points="484.5,282.6 491,279.4 491,285.8"/>
<polygon points="526.5,282.6 520,279.4 520,285.8"/>
<polygon points="453.7,313.5 450.3,305.5 457.1,305.5"/>
<polygon points="453.7,337.8 450.3,346.2 457.1,346.2"/>
</g>
<g fill="#d67c40" font-family="Liberation Sans" font-size="12.2px">
<text x="299.4" y="398.4">500 mm</text>
<text x="493.3" y="287.5">80 mm</text>
<text transform="translate(458.2,292.5) rotate(-90)">45 mm</text>
</g>
<rect x="484" y="313.5" width="43.2" height="24.3" fill="none" stroke="#00e000" stroke-width="2"/>
<g fill="#00e000">
<circle cx="257.2" cy="203.2" r="2.3"/>
<circle cx="484" cy="313.5" r="2"/><circle cx="527.2" cy="313.5" r="2"/>
<circle cx="484" cy="337.8" r="2"/><circle cx="527.2" cy="337.8" r="2"/>
</g>
<g stroke="#cc1f1f" stroke-width="1.4">
<line x1="502" y1="302.5" x2="509" y2="302.5"/>
<line x1="502" y1="349.8" x2="510" y2="349.8"/>
<line x1="471.8" y1="323" x2="471.8" y2="329.5"/>
<line x1="539" y1="323" x2="539" y2="329.5"/>
</g>
</g></svg></body></html>
